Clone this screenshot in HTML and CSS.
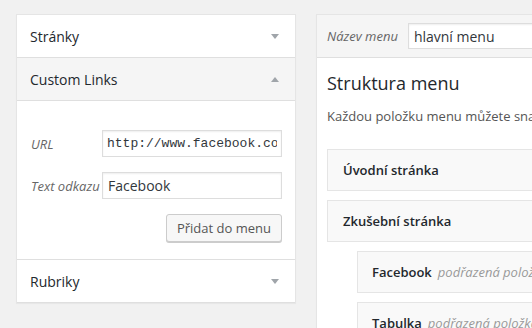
FILE: index.html
```html
<!DOCTYPE html>
<html lang="cs">
<head>
  <meta charset="UTF-8">
  <title>Menu</title>
  <link rel="stylesheet" href="styles.css">
</head>
<body>
  <div class="stranka">
    <div class="boxy">
      <div class="sekce">
        <div class="hlavicka">Stránky <span class="sipka dolu"></span></div>
      </div>
      <div class="sekce otevrena">
        <div class="hlavicka">Custom Links <span class="sipka nahoru"></span></div>
        <div class="obsah">
          <div class="radek">
            <label>URL</label>
            <input class="pole mono" type="text" value="http://www.facebook.com">
          </div>
          <div class="radek">
            <label>Text odkazu</label>
            <input class="pole" type="text" value="Facebook">
          </div>
          <div class="akce">
            <button class="tlacitko">Přidat do menu</button>
          </div>
        </div>
      </div>
      <div class="sekce">
        <div class="hlavicka">Rubriky <span class="sipka dolu"></span></div>
      </div>
    </div>

    <div class="editor">
      <div class="editor-hlavicka">
        <label>Název menu</label>
        <input class="pole nazev" type="text" value="hlavní menu">
      </div>
      <div class="editor-telo">
        <h3>Struktura menu</h3>
        <p>Každou položku menu můžete snadno přetáhnout na požadované místo.</p>
        <ul class="polozky">
          <li class="polozka"><b>Úvodní stránka</b></li>
          <li class="polozka"><b>Zkušební stránka</b></li>
          <li class="polozka pod"><b>Facebook</b> <i>podřazená položka</i></li>
          <li class="polozka pod"><b>Tabulka</b> <i>podřazená položka</i></li>
        </ul>
      </div>
    </div>
  </div>
</body>
</html>
```

FILE: styles.css
```css
body {
  margin: 0;
  background: #f1f1f1;
  font-family: 'Open Sans', sans-serif;
  color: #444;
  font-size: 13px;
  overflow: hidden;
}

.stranka {
  display: flex;
  gap: 20px;
  padding: 14px 0 0 16px;
  align-items: flex-start;
}

.boxy {
  width: 278px;
  flex-shrink: 0;
  background: #fff;
  border: 1px solid #e5e5e5;
  border-bottom: none;
  box-shadow: 0 1px 1px rgba(0, 0, 0, 0.04);
}

.sekce {
  border-bottom: 1px solid #dfdfdf;
}

.hlavicka {
  height: 42px;
  display: flex;
  align-items: center;
  justify-content: space-between;
  padding: 0 16px 0 13px;
  font-size: 14px;
  color: #23282d;
}

.otevrena .hlavicka {
  background: #f5f5f5;
  border-bottom: 1px solid #dfdfdf;
}

.sipka {
  width: 0;
  height: 0;
  border-left: 4px solid transparent;
  border-right: 4px solid transparent;
}

.dolu { border-top: 5px solid #a0a5aa; }
.nahoru { border-bottom: 5px solid #a0a5aa; }

.obsah {
  padding: 29px 13px 17px 14px;
}

.radek {
  display: flex;
  align-items: center;
  margin-bottom: 15px;
}

.radek label {
  width: 71px;
  font-style: italic;
  color: #666;
}

.pole {
  box-sizing: border-box;
  width: 180px;
  height: 27px;
  border: 1px solid #ddd;
  box-shadow: inset 0 1px 2px rgba(0, 0, 0, 0.07);
  font-family: 'Open Sans', sans-serif;
  font-size: 14px;
  color: #32373c;
  padding: 0 5px;
  outline: none;
}

.mono {
  font-family: 'Liberation Mono', monospace;
  font-size: 13px;
  padding: 0 4px;
}

.akce {
  display: flex;
  justify-content: flex-end;
}

.tlacitko {
  height: 28px;
  padding: 0 10px;
  background: #f7f7f7;
  border: 1px solid #ccc;
  border-radius: 3px;
  box-shadow: 0 1px 0 #ccc;
  font-family: 'Open Sans', sans-serif;
  font-size: 13px;
  color: #555;
}

.editor {
  width: 500px;
  flex-shrink: 0;
  background: #fff;
  border: 1px solid #e5e5e5;
  box-shadow: 0 1px 1px rgba(0, 0, 0, 0.04);
}

.editor-hlavicka {
  height: 42px;
  display: flex;
  align-items: center;
  gap: 10px;
  padding: 0 10px;
  background: #f5f5f5;
  border-bottom: 1px solid #dfdfdf;
}

.editor-hlavicka label {
  font-style: italic;
  color: #666;
}

.nazev {
  width: 300px;
  height: 26px;
}

.editor-telo {
  padding: 0 10px;
}

h3 {
  margin: 13px 0 0;
  font-size: 18px;
  font-weight: 400;
  color: #23282d;
}

.editor-telo p {
  margin: 12px 0 24px;
  color: #555;
}

.polozky {
  list-style: none;
  margin: 0;
  padding: 0;
}

.polozka {
  height: 40px;
  display: flex;
  align-items: center;
  gap: 6px;
  margin-bottom: 9px;
  padding: 0 15px;
  background: #f9f9f9;
  border: 1px solid #e5e5e5;
}

.polozka b {
  font-weight: 600;
  color: #23282d;
}

.polozka i {
  color: #999;
}

.pod {
  margin-left: 30px;
  padding-left: 14px;
}
```
